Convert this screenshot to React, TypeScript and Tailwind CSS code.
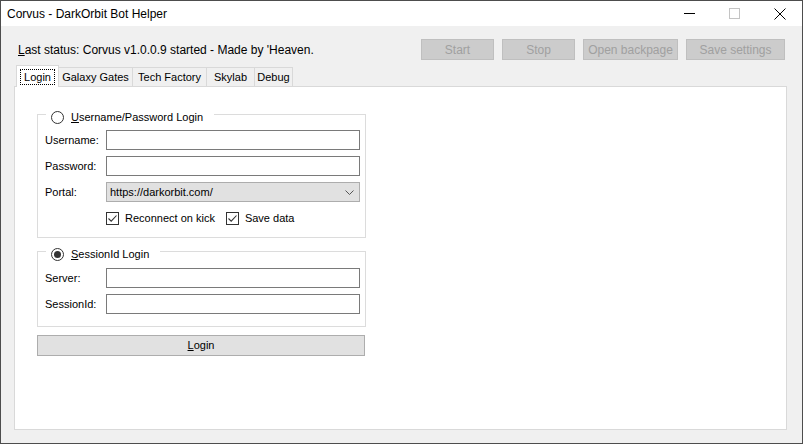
import { useState } from "react";

const font = { fontFamily: '"Liberation Sans", Arial, sans-serif' };

function Radio({ checked }: { checked?: boolean }) {
  return (
    <span className="relative inline-flex h-[13px] w-[13px] items-center justify-center rounded-full border border-[#333] bg-white">
      {checked && <span className="h-[7px] w-[7px] rounded-full bg-[#333]" />}
    </span>
  );
}

function Checkbox({ label }: { label: string }) {
  return (
    <div className="flex items-center gap-[6px]">
      <span className="flex h-[13px] w-[13px] items-center justify-center border border-[#333] bg-white">
        <svg width="11" height="11" viewBox="0 0 11 11">
          <path d="M1.5 5.5 L4.2 8.2 L9.5 2.5" stroke="#333" strokeWidth="1.1" fill="none" />
        </svg>
      </span>
      <span>{label}</span>
    </div>
  );
}

function TextInput() {
  return <div className="h-[20px] w-[254px] border border-[#7a7a7a] bg-white" />;
}

function GroupBox({
  title,
  accel,
  checked,
  children,
  className,
}: {
  title: string;
  accel: string;
  checked?: boolean;
  children: React.ReactNode;
  className?: string;
}) {
  return (
    <div className={"relative w-[329px] border border-[#dcdcdc] " + (className || "")}>
      <div className="absolute -top-[4px] left-[8px] flex h-[13px] items-center gap-[7px] bg-white pr-[11px] pl-[5px]">
        <Radio checked={checked} />
        <span>
          <span className="underline">{accel}</span>
          {title.slice(accel.length)}
        </span>
      </div>
      {children}
    </div>
  );
}

export default function App() {
  const [tab] = useState("Login");
  const tabs = [
    { name: "Login", w: "w-[43px]" },
    { name: "Galaxy Gates", w: "w-[74px]" },
    { name: "Tech Factory", w: "w-[74px]" },
    { name: "Skylab", w: "w-[48px]" },
    { name: "Debug", w: "w-[38px]" },
  ];

  return (
    <div
      className="flex h-[444px] w-[803px] flex-col overflow-hidden border border-[#4d4d4d] bg-[#f0f0f0] text-[11px] text-black"
      style={font}
    >
      {/* title bar */}
      <div className="flex h-[25px] shrink-0 items-center bg-white">
        <span className="pl-[6px] text-[12px]">Corvus - DarkOrbit Bot Helper</span>
        <div className="ml-auto flex h-full items-center">
          <div className="flex h-full w-[45px] items-center justify-center">
            <div className="h-px w-[11px] bg-black" />
          </div>
          <div className="flex h-full w-[45px] items-center justify-center">
            <div className="h-[11px] w-[11px] border border-[#c4c4c4]" />
          </div>
          <div className="flex h-full w-[45px] items-center justify-center">
            <svg width="12" height="12" viewBox="0 0 12 12">
              <path d="M0.5 0.5 L11.5 11.5 M11.5 0.5 L0.5 11.5" stroke="#000" strokeWidth="1" />
            </svg>
          </div>
        </div>
      </div>

      {/* status + buttons */}
      <div className="mt-[13px] flex h-[21px] items-center">
        <span className="pl-[17px] text-[12px] whitespace-nowrap">
          <span className="underline">L</span>ast status: Corvus v1.0.0.9 started - Made by 'Heaven.
        </span>
        <div className="ml-auto flex gap-[8px] pr-[17px] text-[12px] text-[#a0a0a0]">
          {[
            ["Start", "w-[73px]"],
            ["Stop", "w-[73px]"],
            ["Open backpage", "w-[95px]"],
            ["Save settings", "w-[99px]"],
          ].map(([l, w]) => (
            <div
              key={l}
              className={"flex h-[21px] items-center justify-center border border-[#bfbfbf] bg-[#cccccc] " + w}
            >
              {l}
            </div>
          ))}
        </div>
      </div>

      {/* tabs */}
      <div className="mt-[5px] flex h-[21px] items-end pl-[15px]">
        {tabs.map((t) =>
          t.name === tab ? (
            <div
              key={t.name}
              className={"relative z-10 -mb-px flex h-[22px] items-center justify-center border border-b-0 border-[#d9d9d9] bg-white " + t.w}
            >
              <span className="border border-dotted border-black px-[3px] leading-[14px]">{t.name}</span>
            </div>
          ) : (
            <div
              key={t.name}
              className={"flex h-[19px] items-center justify-center border-t border-r border-[#d9d9d9] bg-[#f0f0f0] " + t.w}
            >
              {t.name}
            </div>
          )
        )}
      </div>

      {/* tab panel */}
      <div className="ml-[13px] h-[344px] w-[773px] border border-[#d9d9d9] bg-white pt-[27px] pl-[22px]">
        <GroupBox title="Username/Password Login" accel="U" className="h-[124px]">
          <div className="flex flex-col gap-[6px] pt-[15px] pl-[7px]">
            {["Username:", "Password:"].map((l) => (
              <div key={l} className="flex items-center">
                <span className="w-[61px]">{l}</span>
                <TextInput />
              </div>
            ))}
            <div className="flex items-center">
              <span className="w-[61px]">Portal:</span>
              <div className="flex h-[20px] w-[254px] items-center justify-between border border-[#adadad] bg-[#e1e1e1] pr-[5px] pl-[3px]">
                <span>https://darkorbit.com/</span>
                <svg width="9" height="5" viewBox="0 0 9 5">
                  <path d="M0.5 0.5 L4.5 4.5 L8.5 0.5" stroke="#555" strokeWidth="1" fill="none" />
                </svg>
              </div>
            </div>
            <div className="mt-[2px] flex gap-[11px] pl-[61px]">
              <Checkbox label="Reconnect on kick" />
              <Checkbox label="Save data" />
            </div>
          </div>
        </GroupBox>

        <GroupBox title="SessionId Login" accel="S" checked className="mt-[13px] h-[76px]">
          <div className="flex flex-col gap-[6px] pt-[16px] pl-[7px]">
            {["Server:", "SessionId:"].map((l) => (
              <div key={l} className="flex items-center">
                <span className="w-[61px]">{l}</span>
                <TextInput />
              </div>
            ))}
          </div>
        </GroupBox>

        <div className="mt-[8px] flex h-[21px] w-[328px] items-center justify-center border border-[#adadad] bg-[#e1e1e1]">
          <span>
            <span className="underline">L</span>ogin
          </span>
        </div>
      </div>
    </div>
  );
}
